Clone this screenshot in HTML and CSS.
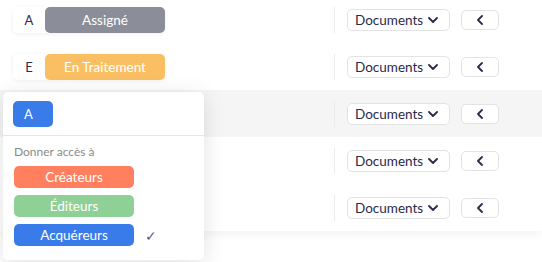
FILE: index.html
```html
<!DOCTYPE html>
<html lang="fr">
  <head>
    <meta charset="UTF-8" />
    <meta name="viewport" content="width=device-width, initial-scale=1" />
    <title>Dossiers</title>
    <link rel="stylesheet" href="styles.css">
  </head>
  <body>
    <div class="table">
      <div class="row">
        <div class="status-cell">
          <div class="status">
            <span class="status-letter">A</span>
            <span class="status-pill pill-assigned">Assigné</span>
          </div>
        </div>
        <div class="actions">
          <button class="doc-btn">Documents
            <svg width="10" height="6" viewBox="0 0 10 6"><path d="M1 1l4 4 4-4" /></svg>
          </button>
          <button class="back-btn">
            <svg width="6" height="10" viewBox="0 0 6 10"><path d="M5 1L1 5l4 4" /></svg>
          </button>
        </div>
      </div>

      <div class="row">
        <div class="status-cell">
          <div class="status">
            <span class="status-letter">E</span>
            <span class="status-pill pill-progress">En Traitement</span>
          </div>
        </div>
        <div class="actions">
          <button class="doc-btn">Documents
            <svg width="10" height="6" viewBox="0 0 10 6"><path d="M1 1l4 4 4-4" /></svg>
          </button>
          <button class="back-btn">
            <svg width="6" height="10" viewBox="0 0 6 10"><path d="M5 1L1 5l4 4" /></svg>
          </button>
        </div>
      </div>

      <!-- status cells of the next rows sit under the open menu -->
      <div class="row active">
        <div class="status-cell"></div>
        <div class="actions">
          <button class="doc-btn">Documents
            <svg width="10" height="6" viewBox="0 0 10 6"><path d="M1 1l4 4 4-4" /></svg>
          </button>
          <button class="back-btn">
            <svg width="6" height="10" viewBox="0 0 6 10"><path d="M5 1L1 5l4 4" /></svg>
          </button>
        </div>
      </div>

      <div class="row">
        <div class="status-cell"></div>
        <div class="actions">
          <button class="doc-btn">Documents
            <svg width="10" height="6" viewBox="0 0 10 6"><path d="M1 1l4 4 4-4" /></svg>
          </button>
          <button class="back-btn">
            <svg width="6" height="10" viewBox="0 0 6 10"><path d="M5 1L1 5l4 4" /></svg>
          </button>
        </div>
      </div>

      <div class="row">
        <div class="status-cell"></div>
        <div class="actions">
          <button class="doc-btn">Documents
            <svg width="10" height="6" viewBox="0 0 10 6"><path d="M1 1l4 4 4-4" /></svg>
          </button>
          <button class="back-btn">
            <svg width="6" height="10" viewBox="0 0 6 10"><path d="M5 1L1 5l4 4" /></svg>
          </button>
        </div>
      </div>
    </div>

    <!-- access menu opened on the 3rd row -->
    <div class="access-menu">
      <div class="menu-head">
        <span class="menu-chip">A</span>
      </div>
      <div class="menu-body">
        <div class="menu-label">Donner accès à</div>
        <div class="menu-option">
          <span class="role role-creators">Créateurs</span>
        </div>
        <div class="menu-option">
          <span class="role role-editors">Éditeurs</span>
        </div>
        <div class="menu-option">
          <span class="role role-buyers">Acquéreurs</span>
          <span class="check">✓</span>
        </div>
      </div>
    </div>
  </body>
</html>
```

FILE: styles.css
```css
body {
  font-family: Lato, "Open Sans", sans-serif;
  background: #fff;
  margin: 0;
  position: relative;
  height: 262px;
  overflow: hidden;
}

.table {
  margin-top: -4px;
  background: white;
  box-shadow: 0 3px 10px rgba(0, 0, 0, 0.05);
}

.row {
  display: flex;
  align-items: center;
  height: 47px;
}

.row.active {
  background: #f5f5f5;
}

.status-cell {
  flex: 1;
  padding-left: 13px;
}

.status {
  display: inline-flex;
  height: 26px;
  background: white;
  border-radius: 5px;
  box-shadow: 0 1px 4px rgba(0, 0, 0, 0.07);
}

.status-letter {
  width: 32px;
  display: flex;
  align-items: center;
  justify-content: center;
  font-size: 13px;
  color: #2b2d50;
}

.status-pill {
  width: 120px;
  display: flex;
  align-items: center;
  justify-content: center;
  border-radius: 5px;
  color: white;
  font-size: 13.5px;
}

.pill-assigned {
  background: #8b8e98;
}

.pill-progress {
  background: #fbbf63;
}

.actions {
  display: flex;
  align-items: center;
  gap: 11px;
  width: 164px;
  height: 26px;
  padding-left: 12px;
  border-left: 1px solid #ececec;
  margin-right: 44px;
  box-sizing: border-box;
}

button {
  font-family: inherit;
  background: white;
  border: 1px solid #e3e3e6;
  border-radius: 5px;
  cursor: pointer;
  padding: 0;
  box-sizing: border-box;
  flex-shrink: 0;
}

.doc-btn {
  width: 103px;
  height: 22px;
  display: flex;
  align-items: center;
  padding: 0 11px 0 7px;
  font-size: 13.5px;
  color: #2a2b4a;
}

.doc-btn svg {
  margin-left: auto;
}

.back-btn {
  width: 38px;
  height: 20px;
  display: flex;
  align-items: center;
  justify-content: center;
}

.doc-btn svg path,
.back-btn svg path {
  fill: none;
  stroke: #2a2b4a;
  stroke-width: 1.8;
  stroke-linecap: round;
  stroke-linejoin: round;
}

.access-menu {
  position: absolute;
  left: 3px;
  top: 92px;
  width: 201px;
  height: 168px;
  background: white;
  border-radius: 5px;
  box-shadow: 0 4px 22px rgba(0, 0, 0, 0.12);
}

.menu-head {
  height: 44px;
  padding: 9px 0 0 10px;
  box-sizing: border-box;
  border-bottom: 1px solid #e6e6e6;
}

.menu-chip {
  display: flex;
  align-items: center;
  width: 40px;
  height: 26px;
  padding-left: 11px;
  box-sizing: border-box;
  background: #3a7bea;
  border-radius: 5px;
  color: white;
  font-size: 13px;
}

.menu-body {
  padding: 9px 0 0 11px;
}

.menu-label {
  font-size: 12px;
  line-height: 14px;
  color: #8a8a8a;
  margin-bottom: 7px;
}

.menu-option {
  display: flex;
  align-items: center;
  gap: 11px;
  margin-bottom: 7px;
}

.role {
  width: 120px;
  height: 22px;
  display: flex;
  align-items: center;
  justify-content: center;
  border-radius: 5px;
  color: white;
  font-size: 13.5px;
}

.role-creators {
  background: #ff7f5e;
}

.role-editors {
  background: #8fd096;
}

.role-buyers {
  background: #3a7bea;
}

.check {
  font-size: 14px;
  color: #6a5870;
}
```
